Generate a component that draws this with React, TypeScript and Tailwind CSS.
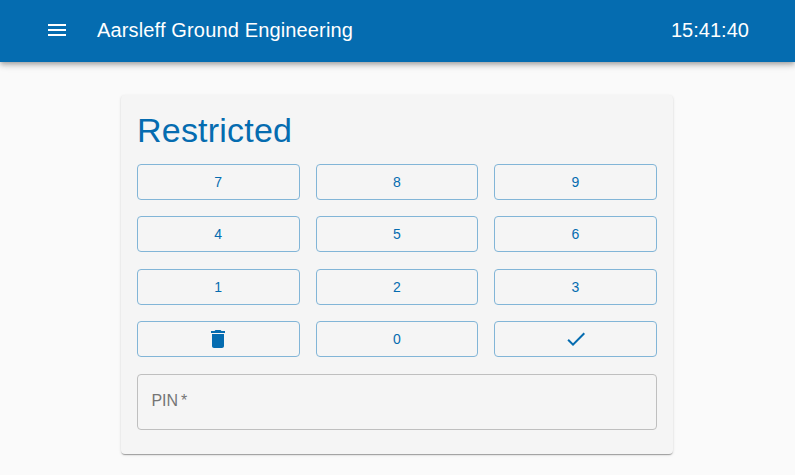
import React from 'react';

const keys = ['7', '8', '9', '4', '5', '6', '1', '2', '3', 'clear', '0', 'ok'];

const KeyContent = ({ value }: { value: string }) => {
  if (value === 'clear') {
    return (
      <svg width="24" height="24" viewBox="0 0 24 24" fill="currentColor">
        <path d="M6 19c0 1.1.9 2 2 2h8c1.1 0 2-.9 2-2V7H6v12zM19 4h-3.5l-1-1h-5l-1 1H5v2h14V4z" />
      </svg>
    );
  }
  if (value === 'ok') {
    return (
      <svg width="24" height="24" viewBox="0 0 24 24" fill="currentColor">
        <path d="M9 16.17 4.83 12l-1.42 1.41L9 19 21 7l-1.41-1.41z" />
      </svg>
    );
  }
  return <span className="pt-[0.5px]">{value}</span>;
};

export default function App() {
  return (
    <div className="flex h-[475px] w-[795px] flex-col overflow-hidden bg-[#fafafa] font-['Liberation_Sans',sans-serif]">
      <header className="z-10 flex h-[62px] shrink-0 items-center bg-[#056cb0] pb-[2px] pl-[45px] pr-[46px] text-white shadow-[0_2px_4px_-1px_rgba(0,0,0,0.2),0_4px_5px_0_rgba(0,0,0,0.14),0_1px_10px_0_rgba(0,0,0,0.12)]">
        <svg width="24" height="24" viewBox="0 0 24 24" fill="currentColor" className="mr-[28px]">
          <path d="M3 18h18v-2H3v2zm0-5h18v-2H3v2zm0-7v2h18V6H3z" />
        </svg>
        <h1 className="flex-1 text-[20px] leading-[32px] tracking-[0.15px]">Aarsleff Ground Engineering</h1>
        <span className="text-[20px] leading-[32px] tracking-[0.03px]">15:41:40</span>
      </header>
      <main className="flex flex-1 justify-center pr-[0.9px] pt-[33px]">
        <div className="h-[359px] w-[552px] rounded bg-[#f5f5f5] px-4 pt-[13px] shadow-[0_2px_1px_-1px_rgba(0,0,0,0.2),0_1px_1px_0_rgba(0,0,0,0.14),0_1px_3px_0_rgba(0,0,0,0.12)]">
          <h2 className="mb-[11px] text-[34px] leading-[45px] tracking-[0.2px] text-[#056cb0]">Restricted</h2>
          <div className="grid grid-cols-3 gap-x-4 gap-y-[16.4px]">
            {keys.map((key) => (
              <button
                key={key}
                type="button"
                className="flex h-[36px] items-center justify-center rounded border border-[#82b5d7] text-[14px] tracking-[0.4px] text-[#056cb0]"
              >
                <KeyContent value={key} />
              </button>
            ))}
          </div>
          <div className="mt-[16.8px] flex h-[56px] items-center rounded border border-[#bfbfbf] pb-[2px] pl-[13.4px] pr-[14px] text-[16px] text-[#757575]">
            PIN<span className="ml-[3px]">*</span>
          </div>
        </div>
      </main>
    </div>
  );
}
